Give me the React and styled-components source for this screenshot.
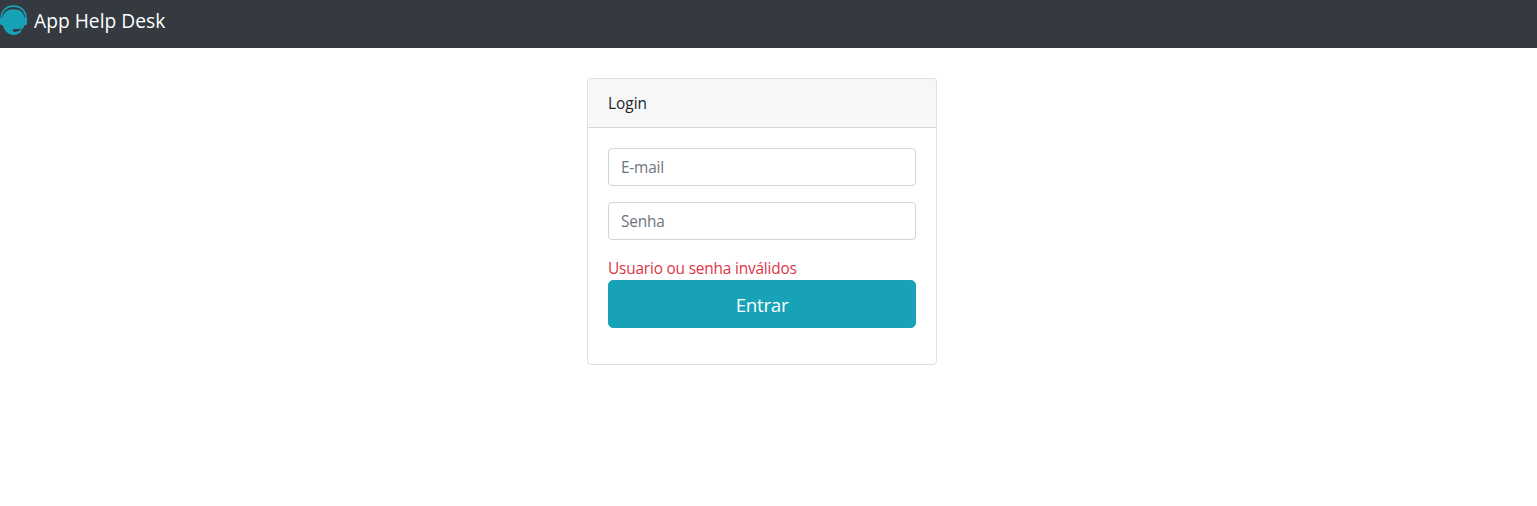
import React from 'react';
import styled, { createGlobalStyle } from 'styled-components';

const GlobalStyle = createGlobalStyle`
  *, *::before, *::after { box-sizing: border-box; }
  body {
    margin: 0;
    background: #fff;
    color: #212529;
    font-family: "Open Sans", "Noto Sans", sans-serif;
    font-size: 15.4px;
    line-height: 24px;
  }
`;

const Navbar = styled.nav`
  display: flex;
  align-items: flex-start;
  height: 48px;
  padding-top: 5px;
  background: #343a40;
`;

const Brand = styled.a`
  display: flex;
  gap: 4px;
  color: #fff;
  font-size: 19.2px;
  line-height: 32px;
  letter-spacing: 0.02px;
  white-space: nowrap;
`;

const Logo = styled.svg`
  display: block;
  width: 30px;
  height: 30px;
`;

const Main = styled.main`
  display: flex;
  justify-content: center;
  padding: 30px 13px 0 0;
`;

const Card = styled.section`
  width: 350px;
  height: 287px;
  border: 1px solid #dfdfdf;
  border-radius: 4px;
  background: #fff;
`;

const CardHeader = styled.header`
  height: 49px;
  padding: 13px 20px 11px;
  border-bottom: 1px solid #d8d8d8;
  border-radius: 3px 3px 0 0;
  background: #f7f7f7;
`;

const Form = styled.form`
  display: flex;
  flex-direction: column;
  padding: 20px;
`;

const Field = styled.input`
  height: 38px;
  margin: 0 0 16px;
  padding: 6px 12px;
  border: 1px solid #ced4da;
  border-radius: 4px;
  background: #fff;
  color: #495057;
  font: inherit;
  letter-spacing: -0.2px;
  outline: none;

  &::placeholder {
    color: #6c757d;
    opacity: 1;
  }
`;

const ErrorMessage = styled.div`
  height: 24px;
  padding-top: 1px;
  color: #dc3545;
  letter-spacing: -0.18px;
  white-space: nowrap;
`;

const SubmitButton = styled.button`
  height: 48px;
  padding: 9px 16px 7px;
  border: 1px solid #17a2b8;
  border-radius: 5px;
  background: #17a2b8;
  color: #fff;
  font-family: inherit;
  font-size: 18.8px;
  line-height: 30px;
  letter-spacing: -0.3px;
`;

function HeadsetLogo() {
  return (
    <Logo viewBox="0 0 30 30" aria-hidden="true">
      <path
        d="M1.3 13C1.3 5.8 6.4 1.2 13.6 1.2S25.9 5.8 25.9 13"
        fill="none"
        stroke="#17a2b8"
        strokeWidth="1.7"
      />
      <path
        d="M0 14.4C0 13.2 0.9 12.5 2.8 12.5C3.5 7 7.7 4.2 13.6 4.2S23.7 7 24.4 12.5C26.3 12.5 27.2 13.2 27.2 14.4V18C27.2 19.6 26.2 20.4 24.3 20.4C23.6 22.9 22 24.9 19.6 26C17.4 27 13.2 27.3 12.9 25.8C12.7 24.6 14.4 24.1 16.2 24.4C18 24.6 19.8 24.1 21.3 22.8L23.6 22.6C22.8 23.9 21.9 24.9 20.7 25.8L21.2 26.8C19.3 28.9 16.8 29.9 13.8 29.9C8.8 29.9 4.2 25.8 2.9 20.4C1 20.4 0 19.6 0 18Z"
        fill="#17a2b8"
      />
      <path
        d="M21.8 23.1C20 24.2 18 24.3 16.1 24.1C14 23.9 12.6 24.6 12.6 25.8C12.6 26.9 14.2 27.2 16.2 26.8C18.7 26.4 20.7 25 21.8 23.1Z"
        fill="#343a40"
      />
    </Logo>
  );
}

export default function App() {
  return (
    <>
      <GlobalStyle />
      <Navbar>
        <Brand>
          <HeadsetLogo />
          App Help Desk
        </Brand>
      </Navbar>
      <Main>
        <Card>
          <CardHeader>Login</CardHeader>
          <Form>
            <Field type="email" placeholder="E-mail" />
            <Field type="password" placeholder="Senha" />
            <ErrorMessage>Usuario ou senha inválidos</ErrorMessage>
            <SubmitButton type="button">Entrar</SubmitButton>
          </Form>
        </Card>
      </Main>
    </>
  );
}
